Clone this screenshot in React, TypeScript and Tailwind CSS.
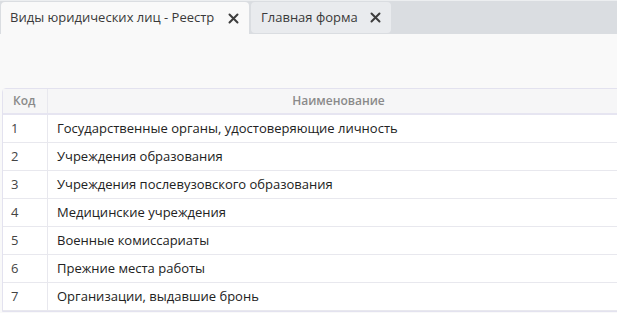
import React from 'react';

const rows: [string, string][] = [
  ['1', 'Государственные органы, удостоверяющие личность'],
  ['2', 'Учреждения образования'],
  ['3', 'Учреждения послевузовского образования'],
  ['4', 'Медицинские учреждения'],
  ['5', 'Военные комиссариаты'],
  ['6', 'Прежние места работы'],
  ['7', 'Организации, выдавшие бронь'],
];

const CloseIcon = () => (
  <svg width="11" height="11" viewBox="0 0 11 11" className="shrink-0">
    <path d="M1.5 1.5 L9.5 9.5 M9.5 1.5 L1.5 9.5" stroke="#3d3d3d" strokeWidth="2" strokeLinecap="round" />
  </svg>
);

export default function App() {
  return (
    <div
      className="w-[617px] h-[313px] overflow-hidden bg-[#f9f9f9] text-[#333]"
      style={{ fontFamily: '"Open Sans", "Liberation Sans", sans-serif' }}
    >
      {/* Tabs */}
      <div className="h-[34px] bg-[#dadde1] border-t border-t-[#eceef0] flex items-end gap-[2px] pl-[1px]">
        <div className="h-[32px] w-[248px] bg-[#f9f9f9] rounded-t-[4px] flex items-center pl-[9px] pr-[10px] justify-between">
          <span className="text-[13px] text-[#3a3a3a] whitespace-nowrap">Виды юридических лиц - Реестр</span>
          <CloseIcon />
        </div>
        <div className="h-[31px] mb-[1px] w-[140px] bg-[#e9ebee] rounded-[4px] flex items-center pl-[10px] pr-[10px] justify-between">
          <span className="text-[13px] text-[#3a3a3a] whitespace-nowrap">Главная форма</span>
          <CloseIcon />
        </div>
      </div>

      {/* Grid */}
      <div className="pt-[54px] pl-[2px]">
        <div className="w-[628px] border border-[#e3e2ef] rounded-tl-[4px] bg-white">
          <div className="flex h-[26px] bg-[#f6f6f7] border-b-2 border-[#e6e5f1] text-[12px] font-semibold text-[#8a8a8a]">
            <div className="w-[45px] shrink-0 border-r border-[#e8e8ee] flex items-center pl-[10px]">Код</div>
            <div className="flex-1 flex items-center justify-center">Наименование</div>
          </div>
          {rows.map(([code, name]) => (
            <div key={code} className="flex h-[28px] border-b border-[#e8e8ee] text-[13px] text-[#222]">
              <div className="w-[45px] shrink-0 border-r border-[#e8e8ee] flex items-center pl-[8px] text-[#444]">{code}</div>
              <div className="flex-1 flex items-center pl-[9px]">{name}</div>
            </div>
          ))}
        </div>
      </div>
    </div>
  );
}
